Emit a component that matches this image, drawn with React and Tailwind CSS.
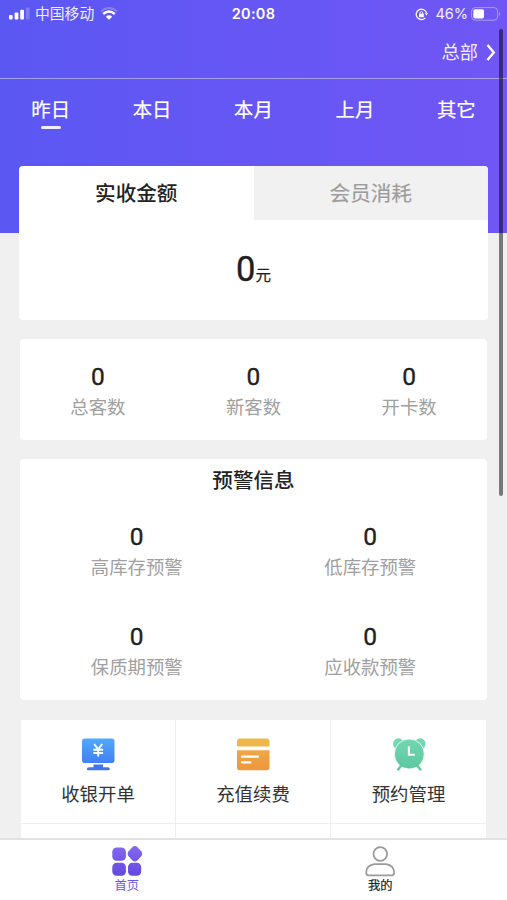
import React from "react";

const ranges = ["昨日", "本日", "本月", "上月", "其它"];
const customers = ["总客数", "新客数", "开卡数"];
const warnings = ["高库存预警", "低库存预警", "保质期预警", "应收款预警"];

function StatusBar() {
  return (
    <div className="grid h-7 grid-cols-3 items-center text-white">
      <div className="flex items-center pl-[9px]">
        <svg width="21" height="13" viewBox="0 0 21 13" fill="#fff">
          <rect x="0" y="8" width="3.6" height="4.6" rx="1" />
          <rect x="5.6" y="5.5" width="3.8" height="7.1" rx="1" />
          <rect x="11.2" y="2.8" width="3.8" height="9.8" rx="1" />
          <rect x="16.8" y="0.4" width="3.8" height="12.2" rx="1" opacity="0.22" />
        </svg>
        <span className="-mt-px ml-[5px] text-[14.8px] leading-none opacity-90">中国移动</span>
        <svg className="ml-[6px]" width="18" height="13" viewBox="0 0 18 13" fill="none">
          <path d="M1 4.2Q9-2.2 17 4.2" stroke="#fff" strokeOpacity="0.25" strokeWidth="2" />
          <path d="M3.2 7Q9 2 14.8 7" stroke="#fff" strokeWidth="2.5" />
          <path d="M5.8 9.7Q9 7 12.2 9.7L9 12.8Z" fill="#fff" />
        </svg>
      </div>
      <div className="text-center font-['Inter','Liberation_Sans',sans-serif] text-[14.5px] font-semibold tracking-[0.3px]">20:08</div>
      <div className="flex items-center justify-end pr-[6px]">
        <svg width="13" height="13" viewBox="0 0 13 13" fill="none" stroke="#fff">
          <path d="M10.3 9.8A5.2 5.2 0 1 1 11.5 5.2" strokeWidth="1.2" />
          <path d="M9.8 5.3h3.2l-1.5 2.4z" fill="#fff" stroke="none" />
          <rect x="4" y="5.8" width="4.8" height="3.5" rx="0.6" fill="#fff" stroke="none" />
          <path d="M5 6V5a1.4 1.4 0 0 1 2.8 0v1" strokeWidth="0.9" />
        </svg>
        <span className="ml-[7px] font-['Inter','Liberation_Sans',sans-serif] text-[14.5px] leading-none opacity-90">46%</span>
        <svg className="ml-[3px]" width="30" height="14" viewBox="0 0 30 14" fill="none">
          <rect x="0.6" y="0.6" width="26" height="12.6" rx="3.6" stroke="#fff" strokeOpacity="0.4" />
          <rect x="2.3" y="2.3" width="10.7" height="9.2" rx="1.8" fill="#fff" />
          <path d="M28 4.8q2.4 2 0 4.3z" fill="#fff" fillOpacity="0.4" />
        </svg>
      </div>
    </div>
  );
}

function Stat({ label }) {
  return (
    <div className="flex flex-col items-center">
      <span className="pt-px font-['Roboto','Liberation_Sans',sans-serif] text-[24.5px] leading-[30px] text-[#1f1f1f] [-webkit-text-stroke:0.35px_#1f1f1f]">0</span>
      <span className="-mt-px text-[18.4px] leading-[30px] text-[#a0a0a0]">{label}</span>
    </div>
  );
}

function CashierIcon() {
  return (
    <svg width="34" height="34" viewBox="0 0 34 34">
      <defs>
        <linearGradient id="cashier" x1="0" y1="0" x2="0" y2="1">
          <stop offset="0" stopColor="#51a9fb" />
          <stop offset="1" stopColor="#4280f6" />
        </linearGradient>
      </defs>
      <rect x="1" y="1.5" width="32.5" height="24.5" rx="2.8" fill="url(#cashier)" />
      <path d="M12.5 27.5h9.5v2.7h4.8q2 0 2 1.7 0 1.4-1.2 1.4H7.1q-1.2 0-1.2-1.4 0-1.7 2-1.7h4.6z" fill="#4273ee" />
      <path d="M13.2 7l4 5.3 4-5.3M12.3 12.8h9.8M12.3 16h9.8M17.2 12.3v7.2" stroke="#fff" strokeWidth="1.9" fill="none" />
    </svg>
  );
}

function RechargeIcon() {
  return (
    <svg width="34" height="34" viewBox="0 0 34 34">
      <defs>
        <linearGradient id="recharge" x1="0" y1="0" x2="0" y2="1">
          <stop offset="0" stopColor="#efa747" />
          <stop offset="1" stopColor="#ee963d" />
        </linearGradient>
      </defs>
      <path d="M3.8 1.5h26.9q2.8 0 2.8 2.8v5.2H1V4.3q0-2.8 2.8-2.8z" fill="#efb64b" />
      <path d="M1 13.3h32.5v17.2q0 2.8-2.8 2.8H3.8Q1 33.3 1 30.5z" fill="url(#recharge)" />
      <path d="M6 19.6h16M6 25.3h8.5" stroke="#fff" strokeWidth="2.2" strokeLinecap="round" />
    </svg>
  );
}

function AlarmIcon() {
  return (
    <svg width="34" height="34" viewBox="0 0 34 34">
      <defs>
        <linearGradient id="alarm" x1="0" y1="0" x2="0" y2="1">
          <stop offset="0" stopColor="#72d8b0" />
          <stop offset="1" stopColor="#5cc7a0" />
        </linearGradient>
      </defs>
      <circle cx="6.5" cy="6.8" r="5.5" fill="#72d8b0" />
      <circle cx="28.1" cy="6.8" r="5.5" fill="#72d8b0" />
      <circle cx="17.3" cy="17" r="15" fill="url(#alarm)" stroke="#fff" strokeWidth="0.8" />
      <path d="M9 29l-2.8 3.4M25.6 29l2.8 3.4" stroke="#5cc7a0" strokeWidth="2.4" strokeLinecap="round" />
      <path d="M16.9 9.3v8.5h5.8" stroke="#fff" strokeWidth="2.1" fill="none" />
    </svg>
  );
}

function HomeIcon() {
  return (
    <svg width="32" height="32" viewBox="0 0 32 32">
      <defs>
        <linearGradient id="home" gradientUnits="userSpaceOnUse" x1="0" y1="0" x2="0" y2="32">
          <stop offset="0" stopColor="#8468ef" />
          <stop offset="1" stopColor="#6248e0" />
        </linearGradient>
      </defs>
      <g fill="url(#home)">
        <rect x="1.3" y="2.5" width="13.6" height="13.2" rx="4.3" />
        <rect x="1.3" y="17.8" width="13.6" height="13" rx="4.3" />
        <rect x="17" y="17.8" width="13.2" height="13" rx="4.3" />
        <path d="M21.5 2q2.4-2 4.8 0l3.9 4.3q2 2.5 0 5l-3.9 4.2q-2.4 2-4.8 0l-3.9-4.2q-2-2.5 0-5z" />
      </g>
    </svg>
  );
}

function UserIcon() {
  return (
    <svg width="32" height="32" viewBox="0 0 32 32" fill="none" stroke="#9b9b9b" strokeWidth="1.8">
      <circle cx="16.3" cy="9" r="6.8" />
      <path d="M10.5 19.2h11.6q8 1.2 8 8.6 0 2.5-2.4 2.5H4.6q-2.4 0-2.4-2.5 0-7.4 8.3-8.6z" strokeLinejoin="round" />
    </svg>
  );
}

const shortcuts = [
  { label: "收银开单", Icon: CashierIcon },
  { label: "充值续费", Icon: RechargeIcon },
  { label: "预约管理", Icon: AlarmIcon },
];

export default function App() {
  return (
    <div className="relative flex h-[900px] w-[507px] flex-col overflow-hidden bg-[#f0f0f0] font-['Noto_Sans_CJK_SC',sans-serif]">
      <header className="h-[233px] shrink-0 bg-linear-to-r from-[#5b57f3] to-[#7056f5] text-white">
        <StatusBar />
        <div className="flex h-[51px] items-center justify-end border-b border-white/45 pb-px pr-[11px]">
          <span className="-mt-[2px] text-[18.2px] leading-none opacity-90">总部</span>
          <svg className="-mt-px ml-[8px]" width="10" height="17" viewBox="0 0 10 17" fill="none" stroke="#fff" strokeWidth="2.4">
            <path d="M1.5 1l6.3 7.5-6.3 7.5" />
          </svg>
        </div>
        <nav className="grid grid-cols-5 pt-[15px]">
          {ranges.map((r, i) => (
            <div key={r} className="flex flex-col items-center">
              <span className="text-[19.4px] leading-[30px] [-webkit-text-stroke:0.2px_#fff]">{r}</span>
              {i === 0 && <span className="ml-px mt-[2px] h-[3px] w-5 rounded-xs bg-white/90" />}
            </div>
          ))}
        </nav>
      </header>

      <main className="-mt-[67px] flex min-h-0 flex-1 flex-col overflow-hidden">
        <section className="mx-[19px] h-[154px] shrink-0 overflow-hidden rounded-[4px] bg-white">
          <div className="grid h-[54px] grid-cols-2 text-center text-[20.6px] leading-[53px]">
            <div className="font-medium text-[#222]">实收金额</div>
            <div className="bg-[#f1f1f1] text-[#9d9d9d] [-webkit-text-stroke:0.2px_#9d9d9d]">会员消耗</div>
          </div>
          <div className="flex items-baseline justify-center pt-[24px] leading-[50px] text-[#1f1f1f]">
            <span className="font-['Roboto','Liberation_Sans',sans-serif] text-[34.5px] [-webkit-text-stroke:0.4px_#1f1f1f]">0</span>
            <span className="text-[15.5px] [-webkit-text-stroke:0.2px_#1f1f1f]">元</span>
          </div>
        </section>

        <section className="mx-5 mt-[19px] grid h-[101px] shrink-0 grid-cols-3 rounded-[4px] bg-white pt-[22px]">
          {customers.map((c) => <Stat key={c} label={c} />)}
        </section>

        <section className="mx-5 mt-[19px] h-[241px] shrink-0 rounded-[4px] bg-white">
          <h2 className="pt-[5px] text-center text-[20.6px] font-medium leading-[30px] text-[#222]">预警信息</h2>
          <div className="grid grid-cols-2 gap-y-10 pt-[27px]">
            {warnings.map((w) => <Stat key={w} label={w} />)}
          </div>
        </section>

        <section className="mx-[21px] mt-5 grid shrink-0 grid-cols-3 bg-white">
          {shortcuts.map(({ label, Icon }, i) => (
            <div key={label} className={i < 2 ? "border-r border-[#eeeeee]" : ""}>
              <div className="flex h-[104px] flex-col items-center border-b border-[#eeeeee] pt-[17px]">
                <Icon />
                <span className="mt-[7px] text-[18.4px] leading-[30px] text-[#333]">{label}</span>
              </div>
              <div className="h-[15px]" />
            </div>
          ))}
        </section>
      </main>

      <footer className="grid h-[62px] shrink-0 grid-cols-2 border-t-2 border-[#e2e2e2] bg-white text-[12.3px] leading-[18px]">
        <div className="flex flex-col items-center pt-[5px] text-[#6657e8]">
          <HomeIcon />
          <span className="-mt-px">首页</span>
        </div>
        <div className="flex flex-col items-center pt-[5px] text-[#222]">
          <UserIcon />
          <span className="-mt-px [-webkit-text-stroke:0.2px_#222]">我的</span>
        </div>
      </footer>

      <div className="absolute right-[4px] top-[29px] h-[467px] w-[4px] rounded-full bg-black/50" />
    </div>
  );
}
